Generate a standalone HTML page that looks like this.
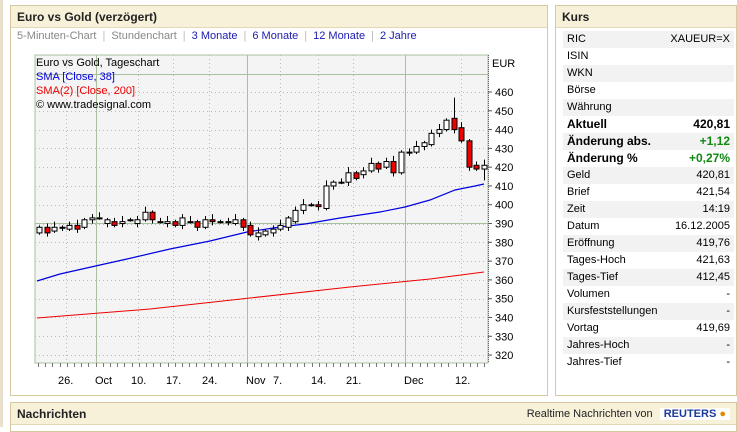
<!DOCTYPE html>
<html><head><meta charset="utf-8"><style>
*{margin:0;padding:0;box-sizing:border-box}
body{width:737px;height:427px;background:#fff;font-family:"Liberation Sans",sans-serif;font-size:11px;position:relative;overflow:hidden;color:#000}
.panel{position:absolute;border:1px solid #d8c8a0;background:#fff}
.hd{position:absolute;left:0;right:0;top:0;height:22px;background:#f7f1d9;border-bottom:1px solid #e3d7b6;font-weight:bold;font-size:12px;padding:4px 0 0 6px;color:#222}
.tabs{position:absolute;left:7px;top:30px;font-size:11px;color:#888;white-space:nowrap}
.tabs span{padding:0 6px}
.tabs .b{color:#1a1ab0}
.tabs i{font-style:normal;color:#bbb}
.row{position:absolute;left:563px;width:171px;height:17px;line-height:17px;padding:0 4px}
.row.g{background:#f2f2f2}
.row b,.row .r{position:absolute;right:4px;top:0}
.row.bd{font-weight:bold;font-size:12px}
.grn{color:#118811}
</style></head><body>
<div style="position:absolute;left:0;top:0;width:3px;height:427px;background:#e8e0cc"></div>
<div class="panel" style="left:10px;top:5px;width:538px;height:391px"><div class="hd">Euro vs Gold (verzögert)</div></div>
<div class="tabs" style="left:12px"><span style="padding-left:5px">5-Minuten-Chart</span><i>|</i><span>Stundenchart</span><i>|</i><span class="b">3 Monate</span><i>|</i><span class="b">6 Monate</span><i>|</i><span class="b">12 Monate</span><i>|</i><span class="b">2 Jahre</span></div>

<svg id="ch" style="position:absolute;left:0;top:0" width="737" height="427" xmlns="http://www.w3.org/2000/svg" font-family="Liberation Sans, sans-serif" font-size="11">
<rect x="35" y="55" width="453" height="308" fill="#f4f4f4" stroke="#a8c0a0"/>
<g id="grid"></g>
<line x1="96.5" y1="55" x2="96.5" y2="363" stroke="#a8c0a0"/>
<line x1="247.5" y1="55" x2="247.5" y2="363" stroke="#a8c0a0"/>
<line x1="405.5" y1="55" x2="405.5" y2="363" stroke="#a8c0a0"/>
<line x1="35" y1="74.5" x2="488" y2="74.5" stroke="#a8c0a0"/>
<line x1="35" y1="223.5" x2="488" y2="223.5" stroke="#a8c0a0"/>
<polyline fill="none" stroke="#e00" stroke-width="1" points="37,318 150,309 250,298 350,287 430,279 484,272"/>
<polyline fill="none" stroke="#0000e0" stroke-width="1.2" points="37,281 60,274 100,265 127,259 170,249 210,241 247,232 280,227 305,224 340,218 380,212 405,207 430,200 455,190 475,186 484,184"/>
<g id="cd"></g>
<line x1="488.5" y1="55" x2="488.5" y2="363" stroke="#666" stroke-dasharray="1,1"/>
<g id="ax"></g>
<text x="36" y="66">Euro vs Gold, Tageschart</text>
<text x="36" y="80" fill="#0000e0">SMA [Close, 38]</text>
<text x="36" y="94" fill="#e00">SMA(2) [Close, 200]</text>
<text x="36" y="108">© www.tradesignal.com</text>
<text x="492" y="67">EUR</text>
<g font-size="11">
<text x="58" y="384">26.</text><text x="95" y="384">Oct</text><text x="131" y="384">10.</text><text x="166" y="384">17.</text><text x="202" y="384">24.</text><text x="246" y="384">Nov</text><text x="273" y="384">7.</text><text x="311" y="384">14.</text><text x="346" y="384">21.</text><text x="404" y="384">Dec</text><text x="455" y="384">12.</text>
</g>
</svg>

<div class="panel" style="left:555px;top:5px;width:182px;height:391px"><div class="hd">Kurs</div></div>
<div class="row g" style="top:31px">RIC<span class="r">XAUEUR=X</span></div>
<div class="row" style="top:48px">ISIN</div>
<div class="row g" style="top:65px">WKN</div>
<div class="row" style="top:82px">Börse</div>
<div class="row g" style="top:99px">Währung</div>
<div class="row bd" style="top:116px">Aktuell<b>420,81</b></div>
<div class="row bd g" style="top:133px">Änderung abs.<b class="grn">+1,12</b></div>
<div class="row bd" style="top:150px">Änderung %<b class="grn">+0,27%</b></div>
<div class="row g" style="top:167px">Geld<span class="r">420,81</span></div>
<div class="row" style="top:184px">Brief<span class="r">421,54</span></div>
<div class="row g" style="top:201px">Zeit<span class="r">14:19</span></div>
<div class="row" style="top:218px">Datum<span class="r">16.12.2005</span></div>
<div class="row g" style="top:235px">Eröffnung<span class="r">419,76</span></div>
<div class="row" style="top:252px">Tages-Hoch<span class="r">421,63</span></div>
<div class="row g" style="top:269px">Tages-Tief<span class="r">412,45</span></div>
<div class="row" style="top:286px">Volumen<span class="r">-</span></div>
<div class="row g" style="top:303px">Kursfeststellungen<span class="r">-</span></div>
<div class="row" style="top:320px">Vortag<span class="r">419,69</span></div>
<div class="row g" style="top:337px">Jahres-Hoch<span class="r">-</span></div>
<div class="row" style="top:354px">Jahres-Tief<span class="r">-</span></div>

<div class="panel" style="left:10px;top:402px;width:727px;height:30px"><div class="hd" style="height:22px">Nachrichten<span style="position:absolute;right:6px;top:5px;font-weight:normal;font-size:11px">Realtime Nachrichten von <span style="display:inline-block;background:#fff;color:#1a3a9a;font-weight:bold;padding:0 4px;margin-left:4px">REUTERS <span style="color:#e08a00">●</span></span></span></div></div>

<script>
(function(){
var Y=function(v){return 92+(460-v)*1.879};
var ns="http://www.w3.org/2000/svg";
function el(p,t,a){var e=document.createElementNS(ns,t);for(var k in a)e.setAttribute(k,a[k]);p.appendChild(e);return e}
var g=document.getElementById('grid');
for(var v=320;v<=460;v+=10){var y=Math.round(Y(v))+.5;el(g,'line',{x1:35,x2:488,y1:y,y2:y,stroke:'#bbb','stroke-dasharray':'1,3'});}
[66,138,173,209,280,318,353,461].forEach(function(x){el(g,'line',{x1:x+.5,x2:x+.5,y1:55,y2:363,stroke:'#bbb','stroke-dasharray':'1,3'})});
var ax=document.getElementById('ax');
for(var v=320;v<=460;v+=10){var y=Y(v);el(ax,'line',{x1:488,x2:492,y1:y,y2:y,stroke:'#555'});var t=el(ax,'text',{x:495,y:y+4});t.textContent=v;}
for(var x=38;x<488;x+=7.2){el(ax,'line',{x1:Math.round(x)+.5,x2:Math.round(x)+.5,y1:363,y2:367,stroke:'#777'});}
var c=[[385,388],[388,385],[386,388],[388,388],[387,389],[389,387],[388,392],[392,393],
[393,393],[390,392],[391,389],[390,391],[392,392],[390,392],[392,396],[396,392],[391,391],[390,391],[391,389],[389,393],[391,391],[391,388],[388,392],[392,391],[391,391],[391,391],[390,392],[392,388],
[389,384],[383,385],[384,386],[385,387],[387,389],[388,393],[391,397],[397,400],[400,400],[400,399],[398,410],[410,412],[412,412],[412,417],[417,414],[416,418],[418,422],[422,419],[420,423],[423,417],[417,428],[428,428],[428,431],[431,433],
[432,438],[438,440],[440,445],[446,440],[441,434],[434,420],[421,419],[419,421]];
var d=document.getElementById('cd');var n=c.length;var sp=(484-39)/(n-1);
for(var i=0;i<n;i++){var o=c[i][0],cl=c[i][1];
var x=Math.round(39+i*sp);var hi=Math.max(o,cl)+1+(i%3),lo=Math.min(o,cl)-1-(i%2);if(i==55)hi=457;if(i==59)lo=413;
el(d,'line',{x1:x+.5,x2:x+.5,y1:Y(hi),y2:Y(lo),stroke:'#000'});
var ty=Y(Math.max(o,cl)),h=Math.max(1,Y(Math.min(o,cl))-ty);
el(d,'rect',{x:x-2,y:ty,width:5,height:h,fill:cl<o?'#e00':'#fff',stroke:'#000','stroke-width':1});}
})();
</script>
</body></html>
